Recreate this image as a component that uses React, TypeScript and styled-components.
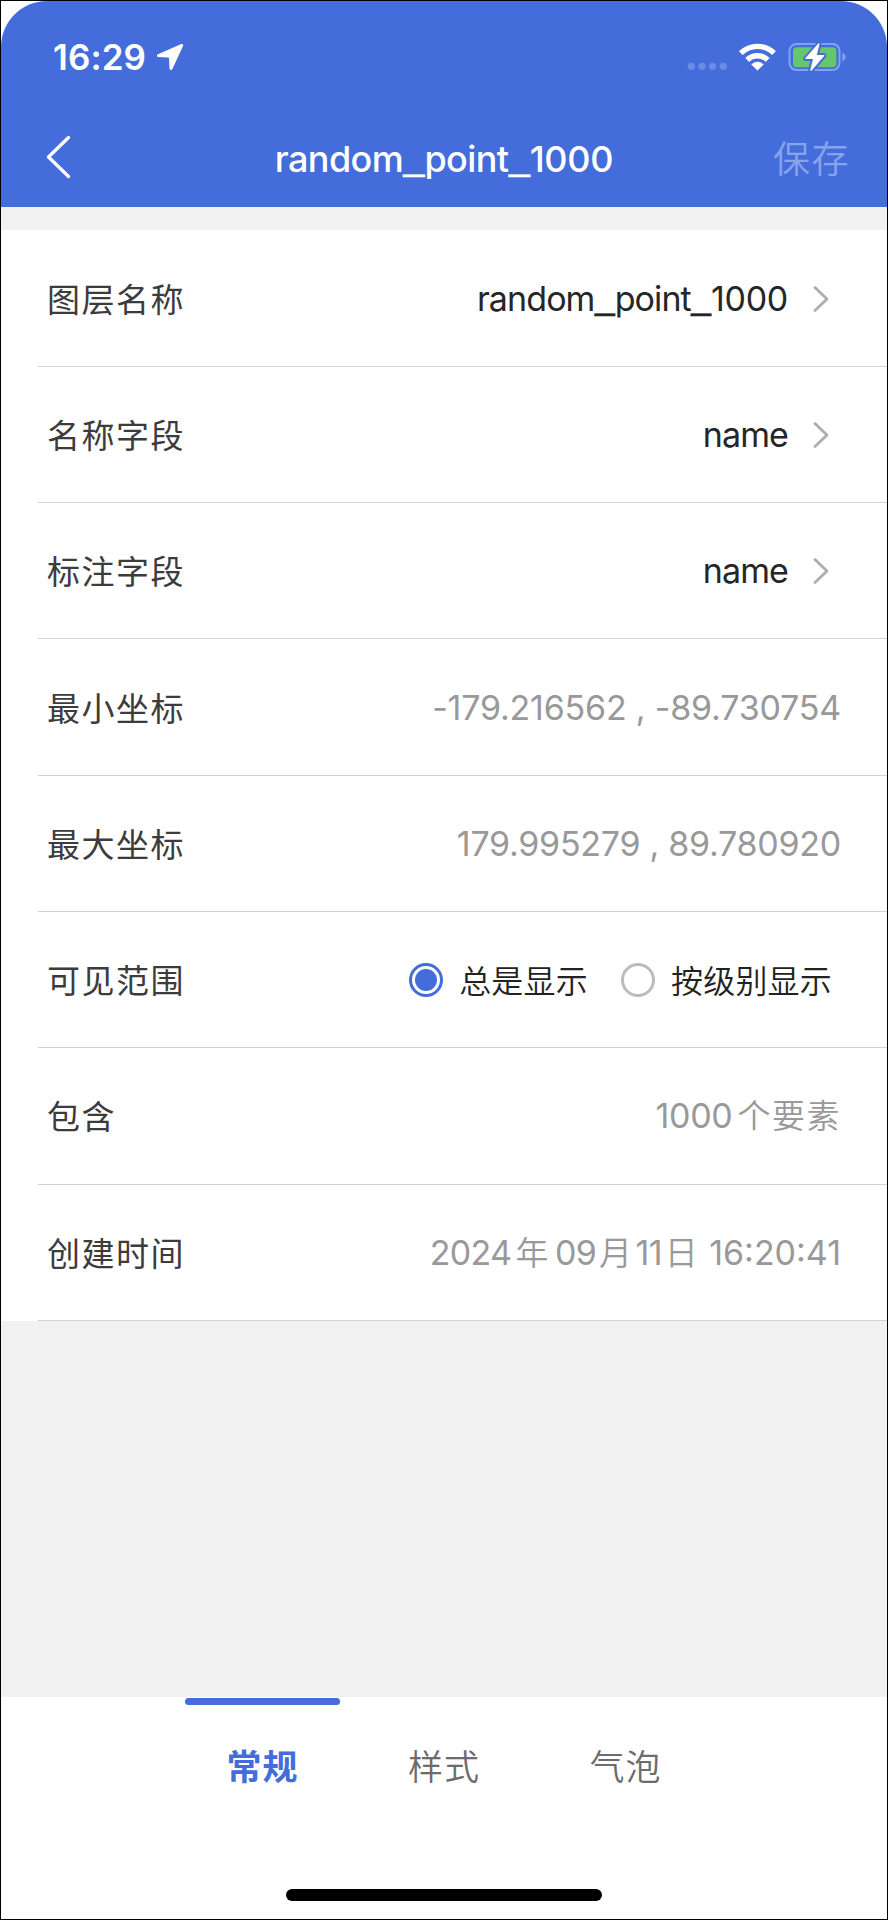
import React, { Fragment, useState } from "react";
import styled, { createGlobalStyle } from "styled-components";

const BLUE = "#446ddb";

const GlobalStyle = createGlobalStyle`
  *, *::before, *::after { box-sizing: border-box; }
  body { margin: 0; background: #fff; }
`;

const Screen = styled.main`
  width: 888px;
  height: 1920px;
  display: flex;
  flex-direction: column;
  border: 1px solid #000;
  background: #fff;
  overflow: hidden;
  font-family: Inter, "Noto Sans CJK SC", sans-serif;
  white-space: nowrap;
`;

const Header = styled.header`
  height: 206px;
  flex: none;
  background: ${BLUE};
  border-radius: 46px 46px 0 0;
  color: #fff;
`;

const StatusBar = styled.div`
  height: 112px;
  padding: 0 41px 0 52px;
  display: flex;
  align-items: center;
  justify-content: space-between;
`;

const StatusGroup = styled.div`
  display: flex;
  align-items: center;
`;

const Clock = styled.span`
  width: 103px;
  font-size: 35px;
  font-weight: 600;
  line-height: 40px;
  letter-spacing: 0.1px;
`;

const NavBar = styled.div`
  height: 92px;
  padding: 0 37px;
  display: grid;
  grid-template-columns: 1fr auto 1fr;
  align-items: center;
`;

const BackButton = styled.button`
  padding: 0;
  border: 0;
  background: none;
  display: flex;
  margin: -4px 0 0 8px;
`;

const Title = styled.h1`
  margin: 0;
  font-size: 36px;
  font-weight: 500;
  line-height: 44px;
  letter-spacing: -0.6px;
`;

const SaveButton = styled.button`
  padding: 0;
  margin-top: -5px;
  border: 0;
  background: none;
  justify-self: end;
  color: #86a3ec;
  font-family: "Noto Sans CJK SC", sans-serif;
  font-size: 37px;
  font-weight: 350;
  line-height: 44px;
  letter-spacing: 1.5px;
`;

const Body = styled.section`
  flex: 1;
  padding-top: 23px;
  background: #f1f1f1;
`;

const List = styled.div`
  padding-top: 0.5px;
  background: #fff;
`;

const Row = styled.div`
  height: 136.31px;
  margin-left: 37px;
  padding: 1px 46px 0 9px;
  display: flex;
  align-items: center;
  justify-content: space-between;
  border-bottom: 1px solid #d2d2d2;
`;

const Label = styled.span`
  margin-top: -2px;
  font-family: "Noto Sans CJK SC", sans-serif;
  font-size: 33px;
  line-height: 44px;
  letter-spacing: 1.5px;
  color: #3c3c3c;
`;

const LinkValue = styled.span`
  display: flex;
  align-items: center;
  gap: 25px;
  margin-right: 12px;
  font-size: 34px;
  line-height: 44px;
  letter-spacing: -0.9px;
  color: #262626;
`;

const Underscore = styled.span`
  font-family: "Liberation Sans", sans-serif;
  font-size: 1.04em;
  line-height: 1;
  letter-spacing: 0;
  vertical-align: 2px;
  margin: 0 0 0 0.5px;
  -webkit-text-stroke: 0.5px currentColor;
`;

const Digits = styled.span<{ $tracking?: number }>`
  letter-spacing: ${(p) => p.$tracking ?? -0.3}px;
`;

const MutedValue = styled.span<{ $tracking?: number }>`
  font-size: 34px;
  line-height: 44px;
  color: #999;
  letter-spacing: ${(p) => p.$tracking ?? 0}px;
`;

const Han = styled.span<{ $before?: number; $after?: number }>`
  font-family: "Noto Sans CJK SC", sans-serif;
  font-size: 33px;
  font-weight: 350;
  line-height: 1;
  letter-spacing: 1.5px;
  margin-left: ${(p) => p.$before ?? 0}px;
  margin-right: ${(p) => p.$after ?? 0}px;
`;

const RadioGroup = styled.div`
  display: flex;
  gap: 33px;
  margin: -2px 9px 0 0;
`;

const RadioOption = styled.button`
  padding: 0;
  border: 0;
  background: none;
  display: flex;
  align-items: center;
  gap: 16px;
  font-family: "Noto Sans CJK SC", sans-serif;
  font-size: 32px;
  font-weight: 350;
  line-height: 44px;
  letter-spacing: 0.2px;
  color: #222;
`;

const RadioMark = styled.span<{ $checked: boolean }>`
  width: 34px;
  height: 34px;
  margin-top: 2px;
  display: grid;
  place-items: center;
  border: 3.5px solid ${(p) => (p.$checked ? BLUE : "#bcbcbc")};
  border-radius: 50%;

  &::after {
    content: "";
    width: 22px;
    height: 22px;
    border-radius: 50%;
    background: ${(p) => (p.$checked ? BLUE : "transparent")};
  }
`;

const Footer = styled.footer`
  height: 222px;
  flex: none;
  background: #fff;
  display: flex;
  flex-direction: column;
  align-items: center;
  justify-content: space-between;
  padding: 1px 0 18px;
`;

const Tabs = styled.nav`
  display: flex;
`;

const Tab = styled.button<{ $active: boolean }>`
  width: 181.5px;
  padding: 0;
  border: 0;
  background: none;
  display: flex;
  flex-direction: column;
  align-items: center;
  gap: 38px;
  font-family: "Noto Sans CJK SC", sans-serif;
  font-size: 35px;
  font-weight: ${(p) => (p.$active ? 700 : 350)};
  line-height: 44px;
  letter-spacing: 1px;
  color: ${(p) => (p.$active ? BLUE : "#6c6c6c")};

  &::before {
    content: "";
    width: 155px;
    height: 7px;
    border-radius: 4px;
    background: ${(p) => (p.$active ? BLUE : "transparent")};
  }
`;

const HomeIndicator = styled.div`
  width: 316px;
  height: 12px;
  border-radius: 6px;
  background: #000;
`;

const LocationIcon = () => (
  <svg width="28" height="28" viewBox="0 0 28 28" fill="#fff">
    <path d="M25.3 1.1 2 11.3C.3 12 .6 14 2.400 14.100L12.200 14.500Q13 14.500 13 15.400L13.500 25.300C13.600 27.400 15.600 27.700 16.400 26L27.100 2.700C27.600 1.400 26.600.500 25.300 1.100Z" />
  </svg>
);

const StatusIcons = () => (
  <svg width="160" height="34" viewBox="686 40 160 34">
    <g fill="#6a8ce5">
      <circle cx="691.300" cy="66.300" r="3.600" />
      <circle cx="702" cy="66.300" r="3.600" />
      <circle cx="712.600" cy="66.300" r="3.600" />
      <circle cx="723.300" cy="66.300" r="3.600" />
    </g>
    <g fill="none" stroke="#fff" strokeWidth="5.400">
      <path d="M740.800 53.200A23.600 23.600 0 0 1 774 53.200" />
      <path d="M747.200 60A14.400 14.400 0 0 1 767.700 60" />
    </g>
    <path d="M757.500 70.200 751.600 64.400Q757.500 59.700 763.400 64.400Z" fill="#fff" stroke="#fff" strokeWidth="0.600" />
    <rect x="789.500" y="44" width="50" height="26" rx="7" fill="none" stroke="#7fa3ee" strokeWidth="2" />
    <path d="M842.300 53Q845.600 54 845.600 57T842.300 61Z" fill="#7fa3ee" />
    <rect x="793" y="47.300" width="43.400" height="20" rx="4" fill="#66c66d" />
    <path
      d="M818.300 43.500 805.200 58.300Q804.800 59 805.800 59L813 59 810.300 69.800Q810.300 71.500 811.700 70.500L824.400 55.800Q824.800 55 823.800 55L816.800 55 819.500 44.500Q819.800 42.500 818.300 43.500Z"
      fill="#fff"
      stroke={BLUE}
      strokeWidth="4"
      paintOrder="stroke"
    />
  </svg>
);

const BackIcon = () => (
  <svg width="26" height="44" viewBox="0 0 26 44" fill="none" stroke="#fff" strokeWidth="3.300" strokeLinecap="round" strokeLinejoin="round">
    <path d="M22.500 2.500 2.500 22 22.500 41.500" />
  </svg>
);

const ChevronIcon = () => (
  <svg width="16" height="28" viewBox="0 0 16 28" fill="none" stroke="#adadad" strokeWidth="2.800" strokeLinecap="round" strokeLinejoin="round">
    <path d="M2 2.500 14 14 2 25.500" />
  </svg>
);

const LayerName = ({ name }: { name: string }) => (
  <span>
    {name.split("_").map((part, i) => (
      <Fragment key={i}>
        {i > 0 && <Underscore>_</Underscore>}
        {/^\d+$/.test(part) ? <Digits>{part}</Digits> : part}
      </Fragment>
    ))}
  </span>
);

const links = [
  { label: "图层名称", value: "random_point_1000" },
  { label: "名称字段", value: "name" },
  { label: "标注字段", value: "name" },
];

const ranges = ["总是显示", "按级别显示"];
const tabs = ["常规", "样式", "气泡"];

export default function App() {
  const [range, setRange] = useState(0);
  const [tab, setTab] = useState(0);

  return (
    <>
      <GlobalStyle />
      <Screen>
        <Header>
          <StatusBar>
            <StatusGroup>
              <Clock>16:29</Clock>
              <LocationIcon />
            </StatusGroup>
            <StatusIcons />
          </StatusBar>
          <NavBar>
            <BackButton aria-label="返回">
              <BackIcon />
            </BackButton>
            <Title>
              <LayerName name="random_point_1000" />
            </Title>
            <SaveButton>保存</SaveButton>
          </NavBar>
        </Header>

        <Body>
          <List>
            {links.map((item) => (
              <Row key={item.label}>
                <Label>{item.label}</Label>
                <LinkValue>
                  <LayerName name={item.value} />
                  <ChevronIcon />
                </LinkValue>
              </Row>
            ))}
            <Row>
              <Label>最小坐标</Label>
              <MutedValue $tracking={-0.2}>-179.216562 , -89.730754</MutedValue>
            </Row>
            <Row>
              <Label>最大坐标</Label>
              <MutedValue $tracking={-0.27}>179.995279 , 89.780920</MutedValue>
            </Row>
            <Row>
              <Label>可见范围</Label>
              <RadioGroup>
                {ranges.map((name, i) => (
                  <RadioOption key={name} onClick={() => setRange(i)}>
                    <RadioMark $checked={range === i} />
                    {name}
                  </RadioOption>
                ))}
              </RadioGroup>
            </Row>
            <Row>
              <Label>包含</Label>
              <MutedValue $tracking={-0.3}>
                1000<Han $before={5}>个要素</Han>
              </MutedValue>
            </Row>
            <Row>
              <Label>创建时间</Label>
              <MutedValue $tracking={-0.7}>
                2024<Han $before={4} $after={5}>年</Han>09<Han $before={3} $after={2}>月</Han>11
                <Han $before={3} $after={1}>日</Han> <Digits $tracking={0}>16:20:41</Digits>
              </MutedValue>
            </Row>
          </List>
        </Body>

        <Footer>
          <Tabs>
            {tabs.map((name, i) => (
              <Tab key={name} $active={tab === i} onClick={() => setTab(i)}>
                {name}
              </Tab>
            ))}
          </Tabs>
          <HomeIndicator />
        </Footer>
      </Screen>
    </>
  );
}
